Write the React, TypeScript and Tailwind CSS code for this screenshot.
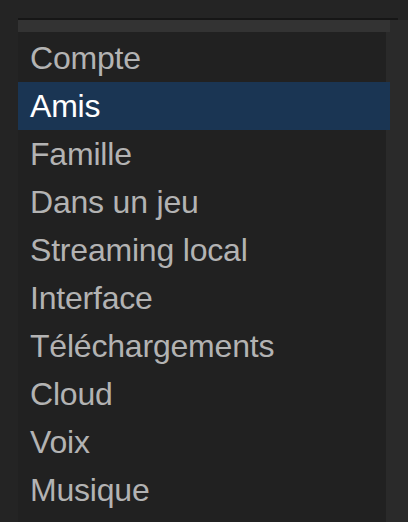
import React from "react";

const items = [
  "Compte",
  "Amis",
  "Famille",
  "Dans un jeu",
  "Streaming local",
  "Interface",
  "Téléchargements",
  "Cloud",
  "Voix",
  "Musique",
];

export default function App() {
  return (
    <div className="w-[408px] h-[522px] bg-[#242424] overflow-hidden pt-[18px] font-['Liberation_Sans',Arial,sans-serif]">
      <div className="ml-[18px] w-[380px] h-[2px] bg-[#161616]" />
      <div className="flex h-[502px]">
        <div className="w-[18px] shrink-0" />
        <div className="flex-1 flex flex-col bg-[#2a2a2a]">
          <div className="w-[372px] h-[12px] bg-[#333333]" />
          <div className="w-[368px] flex-1 bg-[#212121] flex flex-col pt-[2px]">
            {items.map((it, i) => {
              const sel = i === 1;
              return (
                <div
                  key={it}
                  className={
                    sel
                      ? "w-[372px] h-[48px] flex items-center pl-[12px] bg-[#1a3553] text-white text-[32px] leading-none tracking-[-0.2px]"
                      : "w-[368px] h-[48px] flex items-center pl-[12px] text-[#b3b3b3] text-[32px] leading-none tracking-[-0.2px]"
                  }
                >
                  {it}
                </div>
              );
            })}
          </div>
        </div>
      </div>
    </div>
  );
}
